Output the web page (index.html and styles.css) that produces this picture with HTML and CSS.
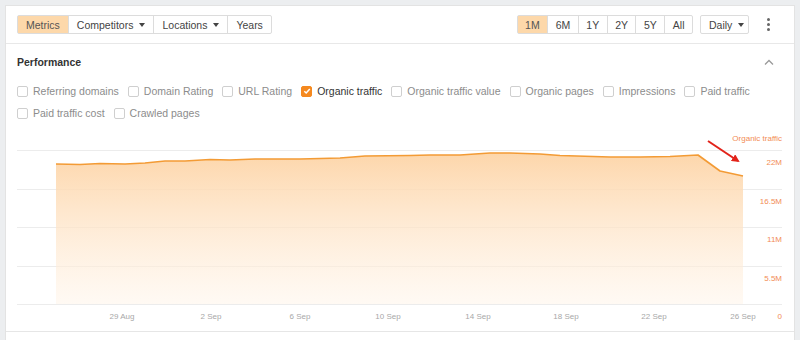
FILE: index.html
```html
<!DOCTYPE html>
<html lang="en">

<head>
   <meta charset="UTF-8">
   <meta name="viewport" content="width=device-width, initial-scale=1.0">
   <title>Performance</title>
   <link rel="stylesheet" href="styles.css">
</head>

<body>
   <div class="card">
      <div class="toolbar">
         <div class="btn-group">
            <div class="btn active">Metrics</div>
            <div class="btn">Competitors <span class="caret"></span></div>
            <div class="btn">Locations <span class="caret"></span></div>
            <div class="btn">Years</div>
         </div>
         <div class="toolbar-right">
            <div class="btn-group periods">
               <div class="btn active">1M</div>
               <div class="btn">6M</div>
               <div class="btn">1Y</div>
               <div class="btn">2Y</div>
               <div class="btn">5Y</div>
               <div class="btn">All</div>
            </div>
            <div class="btn single">Daily <span class="caret"></span></div>
            <div class="kebab"><i></i><i></i><i></i></div>
         </div>
      </div>

      <div class="section">
         <div class="section-head">
            <h2>Performance</h2>
            <svg class="chevron" width="10" height="6" viewBox="0 0 10 6">
               <path d="M1 5.5 L5 1.5 L9 5.5" fill="none" stroke="#9a9a9a" stroke-width="1.3" />
            </svg>
         </div>

         <div class="metrics">
            <label class="metric"><span class="box"></span>Referring domains</label>
            <label class="metric"><span class="box"></span>Domain Rating</label>
            <label class="metric"><span class="box"></span>URL Rating</label>
            <label class="metric checked">
               <span class="box">
                  <svg width="8" height="8" viewBox="0 0 8 8">
                     <path d="M1.3 4.2 L3.2 6 L6.8 2" fill="none" stroke="#fff" stroke-width="1.5" />
                  </svg>
               </span>Organic traffic
            </label>
            <label class="metric"><span class="box"></span>Organic traffic value</label>
            <label class="metric"><span class="box"></span>Organic pages</label>
            <label class="metric"><span class="box"></span>Impressions</label>
            <label class="metric"><span class="box"></span>Paid traffic</label>
            <label class="metric"><span class="box"></span>Paid traffic cost</label>
            <label class="metric"><span class="box"></span>Crawled pages</label>
         </div>

         <svg class="chart" width="788" height="207" viewBox="6 124 788 207">
            <defs>
               <linearGradient id="fade" x1="0" y1="0" x2="0" y2="1">
                  <stop offset="0" stop-color="#fdd4a6" stop-opacity="0.95" />
                  <stop offset="1" stop-color="#fff4e8" stop-opacity="0.5" />
               </linearGradient>
               <marker id="head" markerWidth="8" markerHeight="8" refX="6" refY="4" orient="auto" markerUnits="userSpaceOnUse">
                  <path d="M0 0 L8 4 L0 8 Z" fill="#e2231a" />
               </marker>
            </defs>

            <g class="grid">
               <line x1="17" y1="150.5" x2="782" y2="150.5" />
               <line x1="17" y1="189.5" x2="782" y2="189.5" />
               <line x1="17" y1="227.5" x2="782" y2="227.5" />
               <line x1="17" y1="266.5" x2="782" y2="266.5" />
               <line x1="17" y1="304.5" x2="782" y2="304.5" />
            </g>

            <polygon fill="url(#fade)" points="56,164 80,164.5 100,163.5 125,164 145,163 165,161 185,161 210,159.5 230,160 255,159 300,159 340,158 365,156 410,155.5 430,155 460,155 490,153 510,153 540,154 560,155.5 610,157 640,157 670,156.5 698,155 720,171 743,176 743,304 56,304" />
            <polyline fill="none" stroke="#f39b35" stroke-width="1.6" stroke-linejoin="round" points="56,164 80,164.5 100,163.5 125,164 145,163 165,161 185,161 210,159.5 230,160 255,159 300,159 340,158 365,156 410,155.5 430,155 460,155 490,153 510,153 540,154 560,155.5 610,157 640,157 670,156.5 698,155 720,171 743,176" />

            <text class="series" x="782" y="141" text-anchor="end">Organic traffic</text>
            <g class="y-labels" text-anchor="end">
               <text x="782" y="165">22M</text>
               <text x="782" y="204">16.5M</text>
               <text x="782" y="242">11M</text>
               <text x="782" y="281">5.5M</text>
               <text x="782" y="319">0</text>
            </g>
            <g class="x-labels" text-anchor="middle">
               <text x="122" y="319">29 Aug</text>
               <text x="211" y="319">2 Sep</text>
               <text x="300" y="319">6 Sep</text>
               <text x="388" y="319">10 Sep</text>
               <text x="478" y="319">14 Sep</text>
               <text x="566" y="319">18 Sep</text>
               <text x="654" y="319">22 Sep</text>
               <text x="743" y="319">26 Sep</text>
            </g>

            <line x1="708" y1="141" x2="738" y2="161" stroke="#e2231a" stroke-width="2" marker-end="url(#head)" />
         </svg>
      </div>

      <div class="card-foot"></div>
   </div>
</body>

</html>
```

FILE: styles.css
```css
* {
   margin: 0;
   padding: 0;
   box-sizing: border-box;
   font-family: 'Liberation Sans', Arial, sans-serif;
}

body {
   background-color: #eceef0;
   overflow: hidden;
}

.card {
   margin: 5px 5px 0;
   background-color: white;
   border: 1px solid #e3e3e3;
   border-bottom: none;
   height: 335px;
}

.toolbar {
   display: flex;
   justify-content: space-between;
   align-items: center;
   padding: 9px 11px 9px;
   border-bottom: 1px solid #e8e8e8;
}

.toolbar-right {
   display: flex;
   align-items: center;
}

.btn-group {
   display: flex;
   border: 1px solid #dcdcdc;
   border-radius: 2px;
}

.btn {
   height: 17px;
   padding: 0 8px;
   font-size: 10.5px;
   color: #444;
   display: flex;
   align-items: center;
   gap: 6px;
   border-left: 1px solid #dcdcdc;
}

.periods .btn {
   padding: 0 7.5px;
}

.btn-group .btn:first-child {
   border-left: none;
}

.btn.active {
   background-color: #fdd8aa;
   color: #555;
}

.btn.single {
   border: 1px solid #dcdcdc;
   border-radius: 2px;
   height: 19px;
   margin-left: 7px;
   padding: 0 7px 0 8px;
   width: 49px;
}

.caret {
   width: 0;
   height: 0;
   border-left: 3.5px solid transparent;
   border-right: 3.5px solid transparent;
   border-top: 4px solid #444;
}

.kebab {
   display: flex;
   flex-direction: column;
   gap: 2px;
   margin: 0 13px 0 18px;
}

.kebab i {
   width: 3px;
   height: 3px;
   border-radius: 50%;
   background-color: #666;
}

.section {
   padding: 11px 11px 0;
}

.section-head {
   display: flex;
   justify-content: space-between;
   align-items: center;
   height: 14px;
}

.section-head h2 {
   font-size: 10.5px;
   font-weight: bold;
   color: #333;
}

.chevron {
   margin-right: 9px;
}

.metrics {
   display: flex;
   flex-wrap: wrap;
   margin-top: 11px;
   width: 760px;
}

.metric {
   display: flex;
   align-items: center;
   height: 22px;
   margin-right: 9px;
   font-size: 10.5px;
   color: #8c8c8c;
}

.metric.checked {
   color: #333;
}

.box {
   width: 11px;
   height: 11px;
   border: 1px solid #cfcfcf;
   border-radius: 2px;
   margin-right: 5px;
   display: flex;
   align-items: center;
   justify-content: center;
}

.checked .box {
   background-color: #f5891f;
   border-color: #f5891f;
}

.chart {
   display: block;
   margin: 0 -11px;
}

.grid line {
   stroke: #ececec;
   stroke-width: 1;
}

.chart text {
   font-family: 'Liberation Sans', Arial, sans-serif;
   font-size: 8px;
}

.series,
.y-labels text {
   fill: #f28c55;
}

.x-labels text {
   fill: #a8a8a8;
}

.card-foot {
   border-top: 1px solid #e6e6e6;
}
```
